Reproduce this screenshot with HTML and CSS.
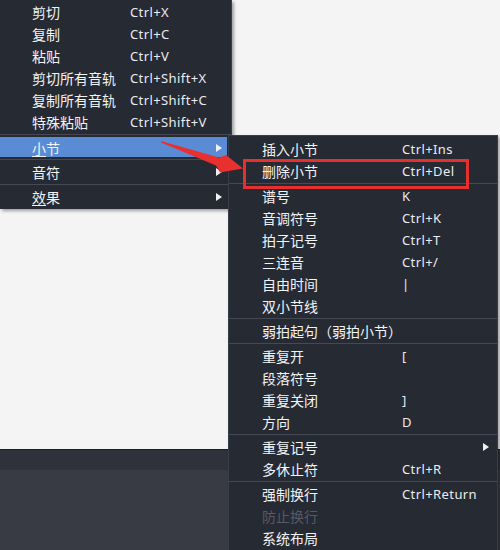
FILE: index.html
```html
<!DOCTYPE html>
<html lang="zh-CN">
<head>
<meta charset="utf-8">
<title>菜单</title>
<link rel="stylesheet" href="styles.css">
</head>
<body>
<div class="app">
  <div class="workspace"></div>
  <div class="divider"></div>
  <div class="statusbar"></div>
  <div class="panel"></div>
</div>

<div class="menu menu-main">
  <div class="item"><span class="label">剪切</span><span class="key">Ctrl+X</span></div>
  <div class="item"><span class="label">复制</span><span class="key">Ctrl+C</span></div>
  <div class="item"><span class="label">粘贴</span><span class="key">Ctrl+V</span></div>
  <div class="item"><span class="label">剪切所有音轨</span><span class="key">Ctrl+Shift+X</span></div>
  <div class="item"><span class="label">复制所有音轨</span><span class="key">Ctrl+Shift+C</span></div>
  <div class="item"><span class="label">特殊粘贴</span><span class="key">Ctrl+Shift+V</span></div>
  <div class="sep"></div>
  <div class="item active"><span class="label"><u>小</u>节</span><span class="key"></span><span class="arrow"></span></div>
  <div class="sep"></div>
  <div class="item"><span class="label">音符</span><span class="key"></span><span class="arrow"></span></div>
  <div class="sep"></div>
  <div class="item"><span class="label"><u>效</u>果</span><span class="key"></span><span class="arrow"></span></div>
</div>

<div class="menu menu-sub">
  <div class="item"><span class="label">插入小节</span><span class="key">Ctrl+Ins</span></div>
  <div class="item"><span class="label">删除小节</span><span class="key">Ctrl+Del</span></div>
  <div class="sep"></div>
  <div class="item"><span class="label">谱号</span><span class="key">K</span></div>
  <div class="item"><span class="label">音调符号</span><span class="key">Ctrl+K</span></div>
  <div class="item"><span class="label">拍子记号</span><span class="key">Ctrl+T</span></div>
  <div class="item"><span class="label">三连音</span><span class="key">Ctrl+/</span></div>
  <div class="item"><span class="label">自由时间</span><span class="key">|</span></div>
  <div class="item"><span class="label">双小节线</span><span class="key"></span></div>
  <div class="sep"></div>
  <div class="item"><span class="label wide">弱拍起句（弱拍小节）</span></div>
  <div class="sep"></div>
  <div class="item"><span class="label">重复开</span><span class="key">[</span></div>
  <div class="item"><span class="label">段落符号</span><span class="key"></span></div>
  <div class="item"><span class="label">重复关闭</span><span class="key">]</span></div>
  <div class="item"><span class="label">方向</span><span class="key">D</span></div>
  <div class="sep"></div>
  <div class="item"><span class="label">重复记号</span><span class="key"></span><span class="arrow"></span></div>
  <div class="item"><span class="label">多休止符</span><span class="key">Ctrl+R</span></div>
  <div class="sep"></div>
  <div class="item"><span class="label">强制换行</span><span class="key">Ctrl+Return</span></div>
  <div class="item disabled"><span class="label">防止换行</span><span class="key"></span></div>
  <div class="item"><span class="label">系统布局</span><span class="key"></span></div>
</div>

<div class="callout"></div>
<svg class="pointer" width="500" height="550" viewBox="0 0 500 550" aria-hidden="true">
  <polygon points="161,141 219,157.5 226,155 243,168.5 220,172.5 216,165.5 161,142.6" fill="#e8302f"/>
</svg>
</body>
</html>
```

FILE: styles.css
```css
html, body {
  margin: 0;
  padding: 0;
}

body {
  width: 500px;
  height: 550px;
  overflow: hidden;
  position: relative;
  font-family: "Noto Sans CJK SC", "Noto Sans", sans-serif;
  background: #373a42;
}

.app {
  display: flex;
  flex-direction: column;
  height: 550px;
}

.workspace {
  height: 449px;
  background: #f4f4f4;
}

.divider {
  height: 1px;
  background: #1d1e22;
}

.statusbar {
  height: 20px;
  background: #2f323a;
}

.panel {
  flex: 1;
  background: #383b43;
}

.menu {
  position: absolute;
  box-sizing: border-box;
  background: #262a33;
  display: flex;
  flex-direction: column;
  box-shadow: 2px 2px 3px rgba(0, 0, 0, 0.35);
}

.menu-main {
  left: 0;
  top: 0;
  width: 232px;
  padding: 1px 0 1px 0;
  border-right: 1px solid #3a3e48;
}

.menu-sub {
  left: 228px;
  top: 135px;
  width: 270px;
  padding-top: 2px;
  border: 1px solid #3a3e48;
  height: 430px;
}

.item {
  display: grid;
  align-items: center;
  box-sizing: border-box;
  height: 22px;
  color: #f3f3f3;
  font-size: 14px;
  white-space: nowrap;
}

.menu-main .item {
  grid-template-columns: 98px 1fr 6px;
  padding: 0 5px 0 32px;
  margin-right: 4px;
}

.menu-sub .item {
  grid-template-columns: 140px 1fr 6px;
  padding: 0 8px 0 33px;
}

.label {
  line-height: 22px;
}

.label.wide {
  grid-column: 1 / 4;
}

.label u {
  text-decoration: underline;
  text-underline-offset: 2px;
}

.key {
  font-family: "Noto Sans", "Open Sans", sans-serif;
  font-size: 13px;
  letter-spacing: 0.4px;
  color: #ececf0;
  line-height: 22px;
}

.arrow {
  width: 0;
  height: 0;
  border-left: 6px solid #f0f0f0;
  border-top: 4.5px solid transparent;
  border-bottom: 4.5px solid transparent;
}

.item.active {
  background: #5a8cd6;
  border-top: 1px solid transparent;
  border-bottom: 1px solid transparent;
  background-clip: padding-box;
}

.item.disabled {
  color: #565b67;
}

.sep {
  height: 1px;
  margin: 1px 0;
  background: #454953;
}

.callout {
  position: absolute;
  left: 243px;
  top: 159px;
  width: 226px;
  height: 30px;
  box-sizing: border-box;
  border: 3px solid #e5302f;
}

.pointer {
  position: absolute;
  left: 0;
  top: 0;
  pointer-events: none;
}
```
